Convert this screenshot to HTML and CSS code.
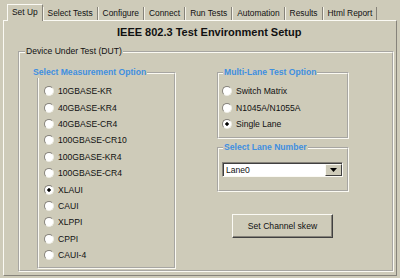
FILE: index.html
```html
<!DOCTYPE html>
<html lang="en">
<head>
    <meta charset="UTF-8">
    <meta name="viewport" content="width=device-width, initial-scale=1.0">
    <title>IEEE 802.3 Test Environment Setup</title>
    <link rel="stylesheet" href="styles.css">
</head>
<body>

<div class="window">
    <div class="tabs">
        <div class="tab active">Set Up</div>
        <div class="tab">Select Tests</div>
        <div class="tab">Configure</div>
        <div class="tab">Connect</div>
        <div class="tab">Run Tests</div>
        <div class="tab">Automation</div>
        <div class="tab">Results</div>
        <div class="tab">Html Report</div>
    </div>

    <div class="page">
        <h1 class="title">IEEE 802.3 Test Environment Setup</h1>

        <fieldset class="group dut">
            <legend>Device Under Test (DUT)</legend>
            <div class="dut-body">
                <fieldset class="group measure">
                    <legend class="blue">Select Measurement Option</legend>
                    <label class="opt"><input type="radio" name="meas"> 10GBASE-KR</label>
                    <label class="opt"><input type="radio" name="meas"> 40GBASE-KR4</label>
                    <label class="opt"><input type="radio" name="meas"> 40GBASE-CR4</label>
                    <label class="opt"><input type="radio" name="meas"> 100GBASE-CR10</label>
                    <label class="opt"><input type="radio" name="meas"> 100GBASE-KR4</label>
                    <label class="opt"><input type="radio" name="meas"> 100GBASE-CR4</label>
                    <label class="opt"><input type="radio" name="meas" checked> XLAUI</label>
                    <label class="opt"><input type="radio" name="meas"> CAUI</label>
                    <label class="opt"><input type="radio" name="meas"> XLPPI</label>
                    <label class="opt"><input type="radio" name="meas"> CPPI</label>
                    <label class="opt"><input type="radio" name="meas"> CAUI-4</label>
                </fieldset>

                <div class="side">
                    <fieldset class="group lanes">
                        <legend class="blue">Multi-Lane Test Option</legend>
                        <label class="opt"><input type="radio" name="lane"> Switch Matrix</label>
                        <label class="opt"><input type="radio" name="lane"> N1045A/N1055A</label>
                        <label class="opt"><input type="radio" name="lane" checked> Single Lane</label>
                    </fieldset>

                    <fieldset class="group lane-num">
                        <legend class="blue">Select Lane Number</legend>
                        <div class="combo">
                            <span class="combo-text">Lane0</span>
                            <span class="combo-btn">
                                <svg width="7" height="4" viewBox="0 0 7 4"><path d="M0 0h7L3.5 4z" fill="#000"/></svg>
                            </span>
                        </div>
                    </fieldset>

                    <button class="skew">Set Channel skew</button>
                </div>
            </div>
        </fieldset>
    </div>
</div>

</body>
</html>
```

FILE: styles.css
```css
body {
    margin: 0;
    background-color: #cecbb9;
    font-family: "Liberation Sans", Arial, sans-serif;
    font-size: 8.6px;
    color: #111;
}
.window {
    margin-left: 3px;
    width: 394px;
}

/* tab strip */
.tabs {
    display: flex;
    align-items: flex-end;
    height: 20px;
    padding-left: 4px;
}
.tab {
    height: 13px;
    line-height: 13px;
    padding: 0 4px;
    font-size: 8.4px;
    border-left: 1px solid #f4f2e8;
    border-right: 1px solid #86837a;
}
.tab.active {
    position: relative;
    z-index: 1;
    height: 16px;
    line-height: 15px;
    margin-bottom: -1px;
    background-color: #cecbb9;
    border-top: 1px solid #fbfaf4;
    border-left: 1px solid #fbfaf4;
}
.page {
    height: 254px;
    border: 1px solid;
    border-color: #fbfaf4 #86837a #86837a #fbfaf4;
}
.title {
    margin: 0;
    padding: 5px 0 0 113px;
    font-size: 11px;
    line-height: 13px;
    font-weight: bold;
    color: #111;
}

/* group boxes */
.group {
    margin: 0;
    border: 2px groove #fbfaf3;
}
.group legend {
    padding: 0 2px;
    line-height: 11px;
}
.blue {
    font-weight: bold;
    color: #3f8fe0;
}
.dut {
    margin: 7px 2px 0 14px;
    padding: 10px 0 1px 17px;
}
.dut legend {
    padding: 0 1px;
    margin-left: -12px;
}
.dut-body {
    display: flex;
    align-items: flex-start;
}
.measure {
    width: 139px;
    box-sizing: border-box;
    padding: 5px 0 4px 5px;
}
.side {
    margin-left: 41px;
    width: 132px;
}
.lanes {
    padding: 5px 0 5px 3px;
}
.lanes legend {
    margin-left: 1px;
}
.lane-num {
    margin-top: 3px;
    padding: 9px 0 13px 3px;
}
.lane-num legend {
    margin-left: 1px;
}

/* radio rows */
.opt {
    display: flex;
    align-items: center;
    gap: 4px;
    height: 16.4px;
}
.opt input {
    appearance: none;
    width: 10px;
    height: 10px;
    margin: 0;
    border-radius: 50%;
    border: 1px solid;
    border-color: #85827a #eeede4 #eeede4 #85827a;
    background: #fff;
}
.opt input:checked {
    background: radial-gradient(circle, #000 1.4px, #fff 2px);
}

/* combo box */
.combo {
    display: flex;
    width: 121px;
    height: 15px;
    box-sizing: border-box;
    background: #fff;
    border: 1px solid;
    border-color: #86837a #fbfaf4 #fbfaf4 #86837a;
    box-shadow: inset 1px 1px 0 #404040;
}
.combo-text {
    flex: 1;
    padding: 1px 0 0 3px;
    line-height: 12px;
}
.combo-btn {
    width: 17px;
    margin: 1px 0 0 0;
    box-sizing: border-box;
    display: flex;
    align-items: center;
    justify-content: center;
    background: #cecbb9;
    border: 1px solid;
    border-color: #fbfaf4 #404040 #404040 #fbfaf4;
}

/* button */
.skew {
    display: block;
    margin: 22px 0 0 15px;
    width: 101px;
    height: 24px;
    padding: 0;
    font-family: "Liberation Sans", Arial, sans-serif;
    font-size: 8.6px;
    color: #111;
    background-color: #cecbb9;
    border: 1px solid;
    border-color: #fbfaf4 #404040 #404040 #fbfaf4;
    box-shadow: inset -1px -1px 0 #86837a;
}
```
